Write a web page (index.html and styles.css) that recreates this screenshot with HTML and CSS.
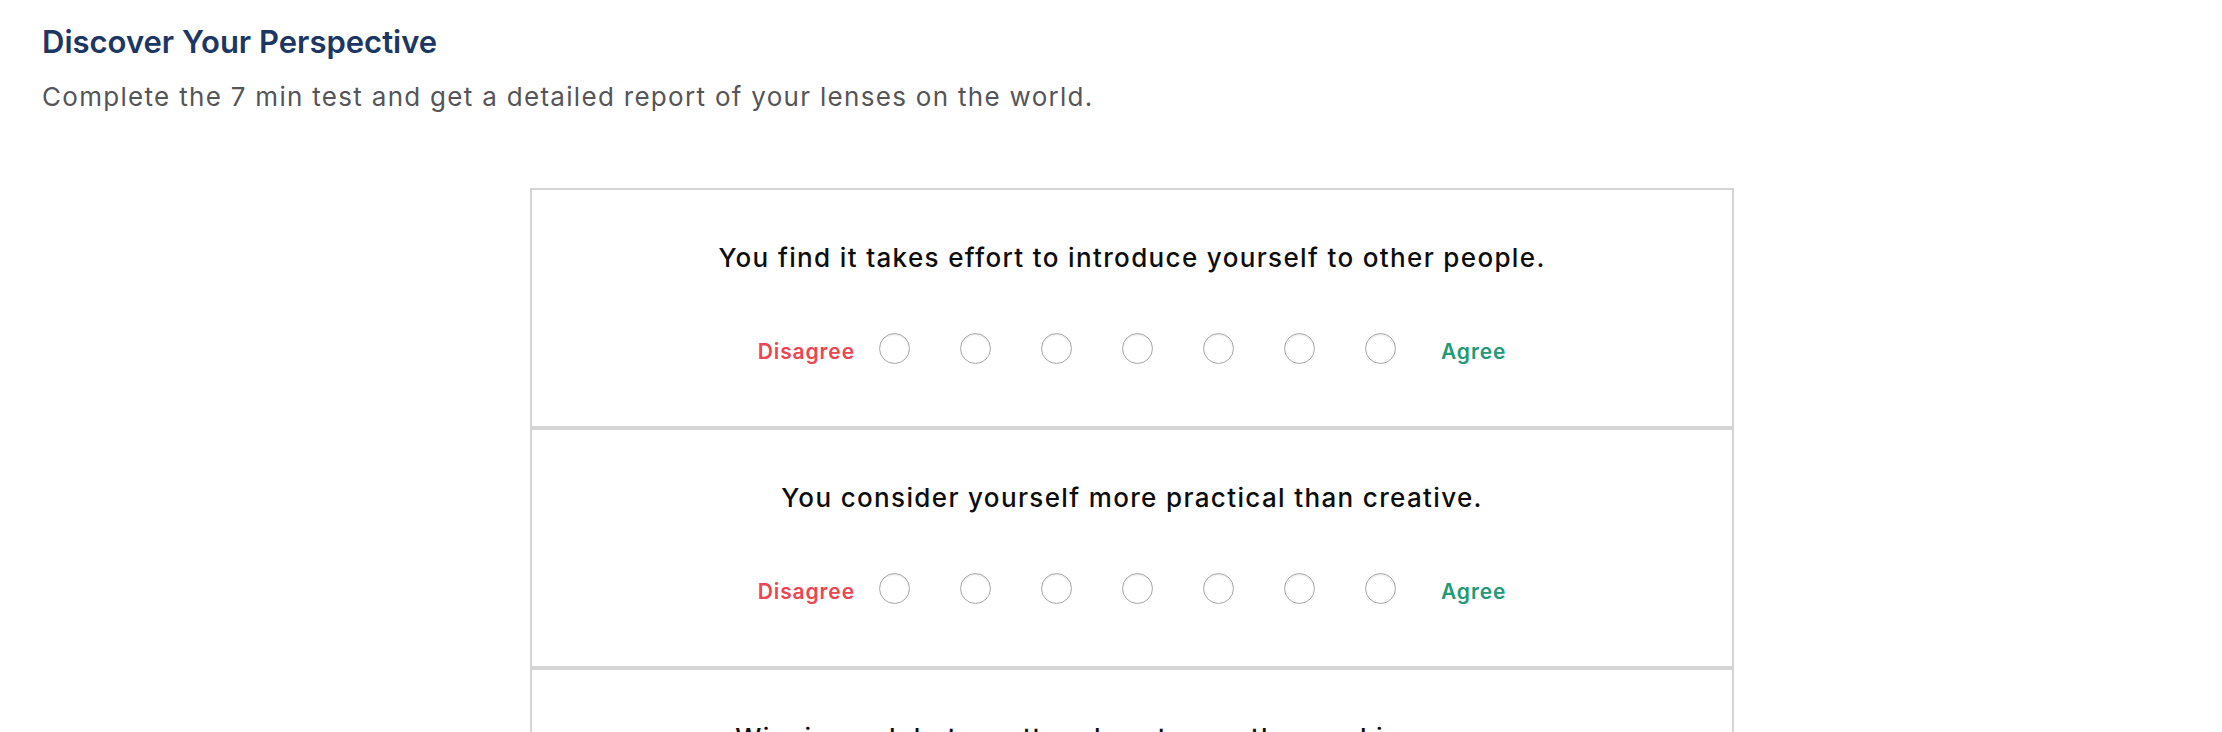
FILE: index.html
```html
<!DOCTYPE html>
<html lang="en">
<head>
<meta charset="utf-8">
<title>Discover Your Perspective</title>
<link rel="stylesheet" href="styles.css">
</head>
<body>
<main class="page">
  <h1 class="title">Discover Your Perspective</h1>
  <p class="subtitle">Complete the 7 min test and get a detailed report of your lenses on the world.</p>

  <section class="quiz">
    <div class="card">
      <p class="question">You find it takes effort to introduce yourself to other people.</p>
      <div class="scale">
        <span class="label disagree">Disagree</span>
        <div class="dots">
          <span class="dot"></span><span class="dot"></span><span class="dot"></span><span class="dot"></span><span class="dot"></span><span class="dot"></span><span class="dot"></span>
        </div>
        <span class="label agree">Agree</span>
      </div>
    </div>
    <div class="card">
      <p class="question">You consider yourself more practical than creative.</p>
      <div class="scale">
        <span class="label disagree">Disagree</span>
        <div class="dots">
          <span class="dot"></span><span class="dot"></span><span class="dot"></span><span class="dot"></span><span class="dot"></span><span class="dot"></span><span class="dot"></span>
        </div>
        <span class="label agree">Agree</span>
      </div>
    </div>
    <div class="card">
      <p class="question">Winning a debate matters less to you than making sure no one gets upset.</p>
      <div class="scale">
        <span class="label disagree">Disagree</span>
        <div class="dots">
          <span class="dot"></span><span class="dot"></span><span class="dot"></span><span class="dot"></span><span class="dot"></span><span class="dot"></span><span class="dot"></span>
        </div>
        <span class="label agree">Agree</span>
      </div>
    </div>
  </section>
</main>
</body>
</html>
```

FILE: styles.css
```css
html, body {
  margin: 0;
  padding: 0;
  background: #ffffff;
}

body {
  font-family: Inter, "Liberation Sans", Arial, sans-serif;
  color: #111111;
}

.page {
  padding: 0 0 40px 42px;
}

.title {
  margin: 0;
  padding-top: 24px;
  font-size: 31px;
  line-height: 36px;
  font-weight: 600;
  color: #1c3763;
}

.subtitle {
  margin: 22px 0 0 0;
  font-size: 26px;
  line-height: 30px;
  font-weight: 400;
  letter-spacing: 1.3px;
  color: #555558;
}

.quiz {
  width: 1204px;
  margin: 76px auto 0 auto;
}

.card {
  box-sizing: border-box;
  min-height: 240px;
  border: 2px solid #d4d4d4;
  display: flex;
  flex-direction: column;
  align-items: center;
  padding-top: 53px;
  padding-bottom: 62px;
}

.question {
  margin: 0;
  max-width: 850px;
  font-size: 26px;
  line-height: 30px;
  font-weight: 500;
  letter-spacing: 1.35px;
  color: #0d0d0d;
  text-align: center;
}

.scale {
  display: flex;
  align-items: center;
  margin-top: 59px;
  height: 32px;
}

.label {
  font-size: 21px;
  line-height: 26px;
  font-weight: 600;
  letter-spacing: 0.9px;
  padding-top: 8px;
}

.disagree {
  color: #ef4452;
  margin-right: 24px;
}

.agree {
  color: #239a76;
  margin-left: 45px;
}

.dots {
  display: flex;
  gap: 50px;
}

.dot {
  box-sizing: border-box;
  width: 31px;
  height: 31px;
  border-radius: 50%;
  border: 1.5px solid #a9a9a9;
  background: #ffffff;
  box-shadow: inset 0 1px 2px rgba(0, 0, 0, 0.12);
}
```
